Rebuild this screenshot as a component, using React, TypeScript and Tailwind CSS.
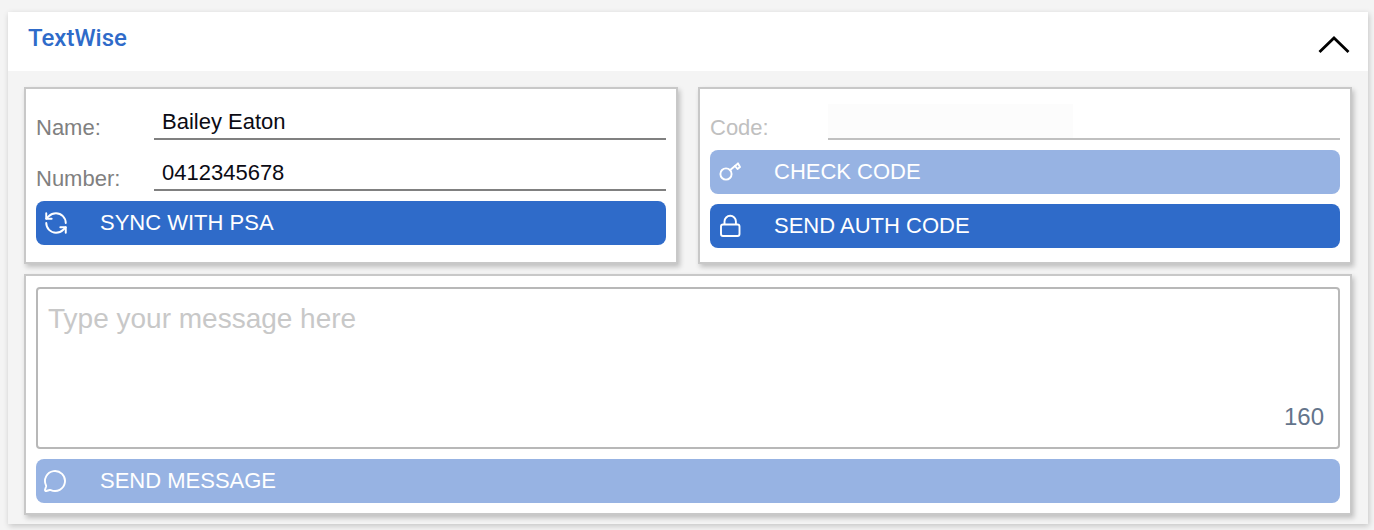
import { MessageCircle, RefreshCcw } from "lucide-react";
import type { ReactNode } from "react";

const font = "font-['Liberation_Sans',Arial,sans-serif]";

function KeyIcon() {
  return (
    <svg width="24" height="24" viewBox="0 0 24 24" fill="none" stroke="currentColor" strokeWidth="1.9" strokeLinejoin="round" strokeLinecap="round">
      <circle cx="8" cy="14" r="5.6" />
      <path d="M12.2 10 L20 3.6" />
      <path d="M17 6 L19.5 9 L22 7 L20 3.6" />
    </svg>
  );
}

function LockIcon() {
  return (
    <svg width="24" height="24" viewBox="0 0 24 24" fill="none" stroke="currentColor" strokeWidth="1.9">
      <rect x="3" y="10.5" width="18.5" height="11.5" rx="2" />
      <path d="M6.5 10.5 V7.5 a5.7 5.7 0 0 1 11.4 0 V10.5" />
    </svg>
  );
}

function ActionButton({ icon, label, faded }: { icon: ReactNode; label: string; faded?: boolean }) {
  return (
    <button className={`flex h-[44px] w-full items-center rounded-[8px] text-[22px] leading-none text-white ${faded ? "bg-[#97b3e3]" : "bg-[#2f6bc9]"}`}>
      <span className="flex w-[64px] shrink-0 pl-[8px]">{icon}</span>
      <span className="text-[22px]">{label}</span>
    </button>
  );
}

function Field({ label, value, disabled }: { label: string; value?: string; disabled?: boolean }) {
  return (
    <div className="flex h-[32px] items-end">
      <span className={`w-[118px] shrink-0 text-[22px] leading-[24px] ${disabled ? "text-[#c0c0c0]" : "text-[#808080]"}`}>{label}</span>
      <div className={`h-[32px] flex-1 border-b-2 ${disabled ? "border-[#c0c0c0]" : "border-[#808080]"}`}>
        {disabled ? (
          <div className="-mt-[4px] h-[34px] w-[245px] bg-[#fcfcfc]" />
        ) : (
          <div className="pl-[8px] pt-[2px] text-[22px] leading-[24px] text-[#0b0b14]">{value}</div>
        )}
      </div>
    </div>
  );
}

function Panel({ className, children }: { className: string; children: ReactNode }) {
  return (
    <section className={`border-2 border-[#c8c8c8] bg-white shadow-[2px_3px_5px_rgba(0,0,0,0.22)] ${className}`}>
      {children}
    </section>
  );
}

export default function App() {
  return (
    <div className={`h-[530px] overflow-hidden bg-[#f4f4f4] pl-[8px] pr-[6px] pt-[12px] ${font}`}>
      <div className="h-[512px] bg-[#f4f4f4] shadow-[1px_2px_6px_rgba(0,0,0,0.2)]">
        <header className="flex h-[59px] items-start justify-between bg-white pl-[20px] pr-[18px]">
          <h1 className="pt-[12px] font-['Roboto',sans-serif] text-[24px] font-medium leading-[28px] text-[#2f6bc9]">TextWise</h1>
          <svg className="mt-[23px]" width="32" height="19" viewBox="0 0 32 19" fill="none" stroke="#000" strokeWidth="2.8">
            <path d="M1.5 17 L16 3 L30.5 17" />
          </svg>
        </header>
        <div className="flex flex-col gap-[10px] p-[16px]">
          <div className="grid grid-cols-[653.5px_654px] gap-[20.5px]">
            <Panel className="h-[177px] px-[10px] pt-[19px]">
              <Field label="Name:" value="Bailey Eaton" />
              <div className="mt-[19px]">
                <Field label="Number:" value="0412345678" />
              </div>
              <div className="mt-[10px]">
                <ActionButton icon={<RefreshCcw className="-ml-[1px]" size={26} strokeWidth={1.8} />} label="SYNC WITH PSA" />
              </div>
            </Panel>
            <Panel className="h-[177px] px-[10px] pt-[19px]">
              <Field label="Code:" disabled />
              <div className="mt-[10px] flex flex-col gap-[10px]">
                <ActionButton icon={<KeyIcon />} label="CHECK CODE" faded />
                <ActionButton icon={<LockIcon />} label="SEND AUTH CODE" />
              </div>
            </Panel>
          </div>
          <Panel className="h-[241px] px-[10px] pt-[11px]">
            <div className="relative h-[162px] rounded-[4px] border-2 border-[#b8b8b8] bg-white px-[10px] pt-[14px] text-[28px] leading-[32px] text-[#c8c8c8]">
              Type your message here
              <span className="absolute bottom-[17px] right-[14px] text-[24px] leading-[26px] text-[#64748b]">160</span>
            </div>
            <div className="mt-[10px]">
              <ActionButton icon={<MessageCircle className="-ml-[1px]" size={24} strokeWidth={1.9} />} label="SEND MESSAGE" faded />
            </div>
          </Panel>
        </div>
      </div>
    </div>
  );
}
